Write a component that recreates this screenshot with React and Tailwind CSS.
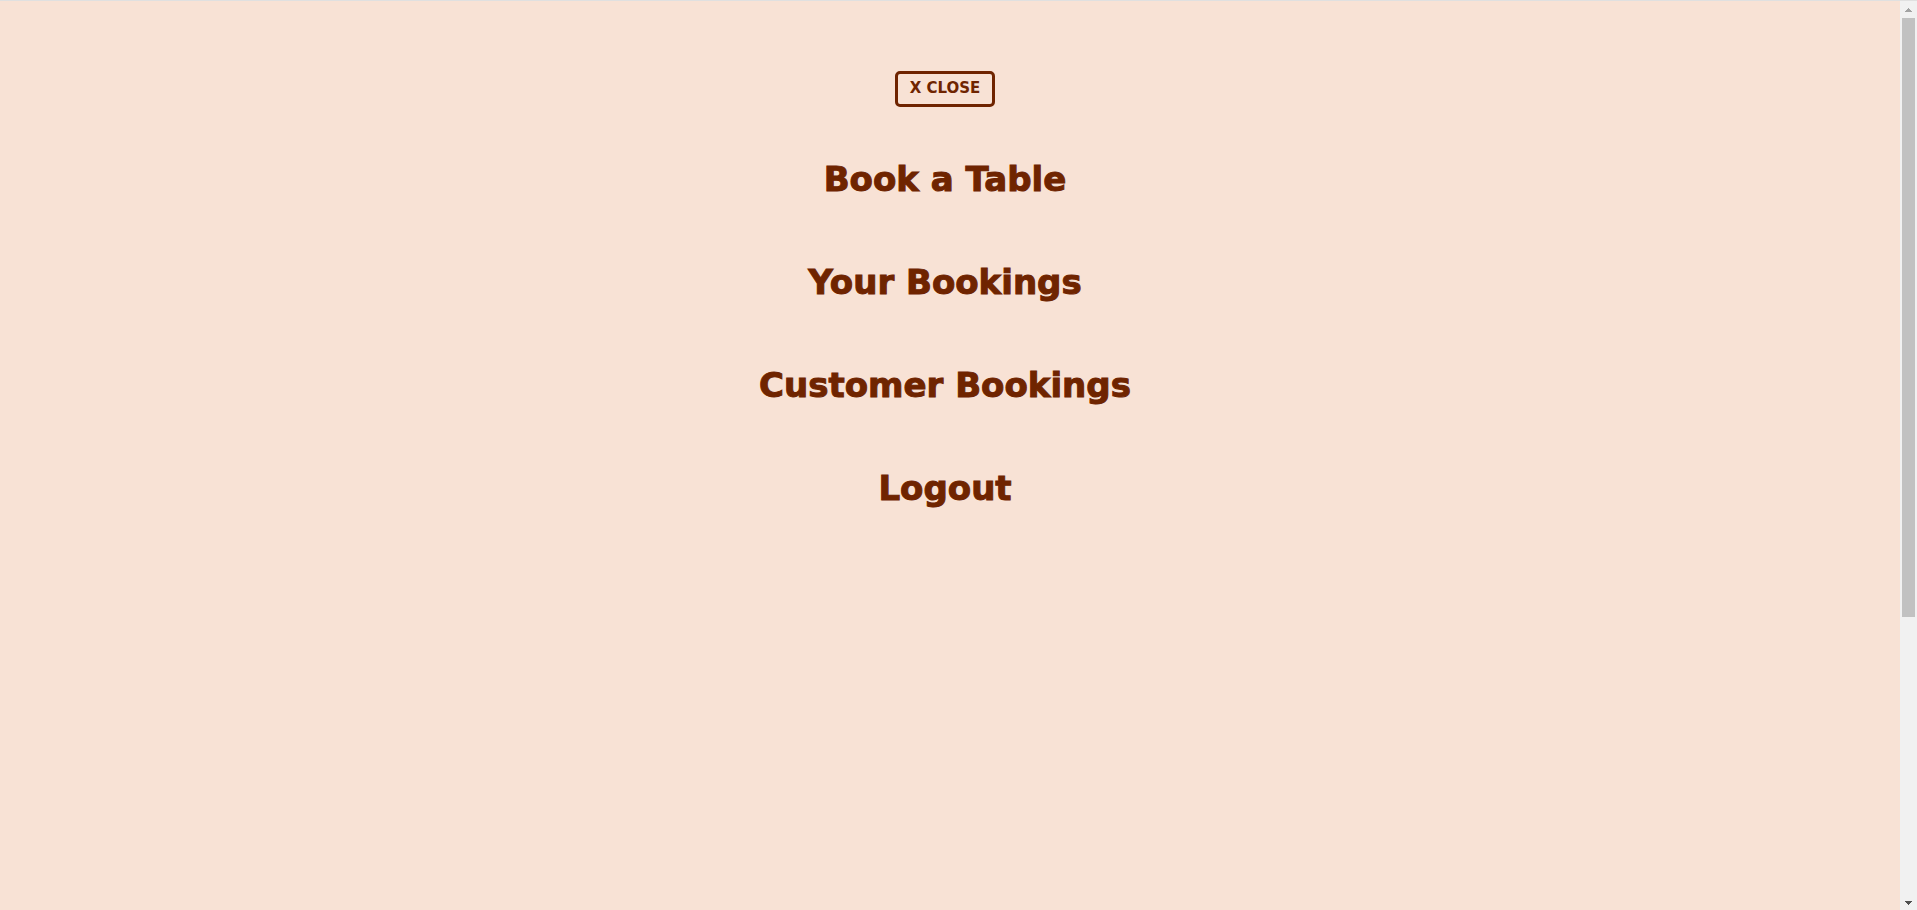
const links = [
  { label: "Book a Table", href: "#book" },
  { label: "Your Bookings", href: "#bookings" },
  { label: "Customer Bookings", href: "#customers" },
  { label: "Logout", href: "#logout" },
];

function ScrollTrack() {
  return (
    <div aria-hidden="true" className="flex w-[17px] shrink-0 flex-col items-center bg-[#f1f1f1]">
      <svg className="h-[17px] w-[17px] shrink-0" viewBox="0 0 17 17" shapeRendering="crispEdges">
        <path d="M8 7h1v1h1v1h1v1h1v1H5v-1h1V9h1V8h1z" fill="#a3a3a3" />
      </svg>
      <div className="flex w-[13px] flex-1 flex-col">
        <div className="h-[68.5%] bg-[#c1c1c1]" />
      </div>
      <svg className="h-[17px] w-[17px] shrink-0" viewBox="0 0 17 17" shapeRendering="crispEdges">
        <path d="M5 8h7v1h-1v1h-1v1H9v1H8v-1H7v-1H6V9H5z" fill="#505050" />
      </svg>
    </div>
  );
}

export default function App() {
  return (
    <div className="flex min-h-screen flex-col border-t border-[#e0e0e0] bg-[#f8e2d5] font-['DejaVu_Sans',sans-serif] font-bold text-[#6f2400]">
      <div className="flex flex-1">
        <main className="flex flex-1 flex-col items-center pt-[70px] pr-[10px]">
          <button
            type="button"
            className="flex h-9 cursor-pointer items-center justify-center rounded-[5px] border-3 border-[#6f2400] px-3 pb-0.5 text-[15px] leading-5"
          >
            X CLOSE
          </button>
          <nav aria-label="Main" className="mt-5">
            <ul className="flex flex-col items-center">
              {links.map(({ label, href }) => (
                <li key={label} className="flex h-[103px] items-center">
                  <a
                    href={href}
                    className="text-[34px] leading-10 [-webkit-text-stroke:1px_#6f2400]"
                  >
                    {label}
                  </a>
                </li>
              ))}
            </ul>
          </nav>
        </main>
        <ScrollTrack />
      </div>
    </div>
  );
}
